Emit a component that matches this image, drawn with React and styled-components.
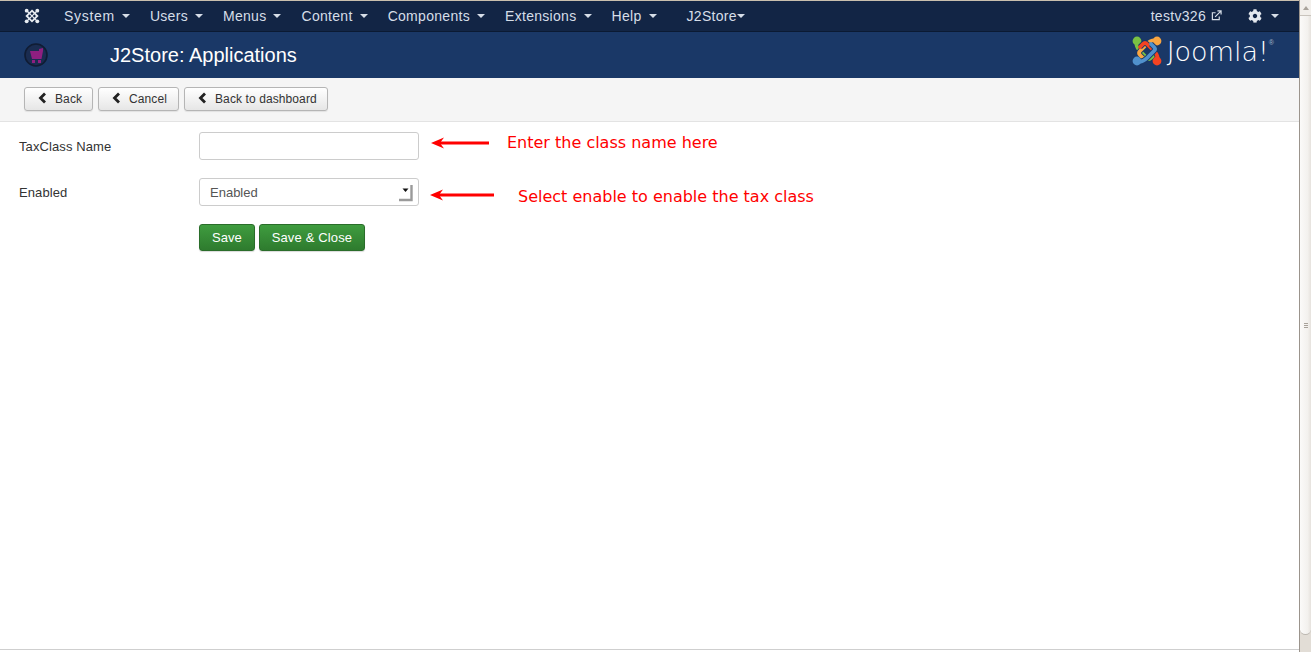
import React from "react";
import styled, { createGlobalStyle } from "styled-components";
import { FaCog } from "react-icons/fa";

const GlobalStyle = createGlobalStyle`
  html, body {
    margin: 0;
    padding: 0;
    background: #fff;
    overflow: hidden;
  }
  * { box-sizing: border-box; }
`;

const Page = styled.div`
  display: flex;
  width: 1311px;
  height: 652px;
  overflow: hidden;
  font-family: "Liberation Sans", Arial, sans-serif;
  color: #333;
`;

const Main = styled.div`
  flex: 1;
  min-width: 0;
  display: flex;
  flex-direction: column;
  border-top: 1px solid #c9bfae;
`;

const NavBar = styled.div`
  height: 31px;
  display: flex;
  align-items: center;
  background: #122545;
  border-bottom: 1px solid #0b1a33;
  padding: 0 20px 1px 24px;
  font-size: 14px;
  color: #d6dee8;
`;

const NavLogo = styled.svg`
  width: 16px;
  height: 16px;
  margin-right: 24px;
`;

const NavItem = styled.span`
  display: flex;
  align-items: center;
  gap: ${(p) => (p.$tight ? "0" : "7px")};
  margin-right: ${(p) => p.$space || 20}px;
  letter-spacing: 0.3px;
  white-space: nowrap;
  &:first-of-type {
    letter-spacing: 0.7px;
  }
`;

const Caret = styled.i`
  display: block;
  width: 0;
  height: 0;
  border-left: 4px solid transparent;
  border-right: 4px solid transparent;
  border-top: 4px solid #d6dee8;
  margin-top: 1px;
`;

const NavRight = styled.div`
  margin-left: auto;
  display: flex;
  align-items: center;
`;

const UserName = styled.span`
  letter-spacing: 0.3px;
`;

const ExtIcon = styled.svg`
  width: 11px;
  height: 11px;
  margin-left: 5px;
  margin-right: 26px;
`;

const Gear = styled(FaCog)`
  width: 14px;
  height: 14px;
  margin-right: 9px;
  color: #e4e8ee;
`;

const TitleBar = styled.div`
  height: 46px;
  display: flex;
  align-items: center;
  background: #1a3867;
  padding: 0 25px 0 24px;
`;

const CartBadge = styled.svg`
  width: 25px;
  height: 25px;
  margin-right: 61px;
`;

const Title = styled.h1`
  margin: 0;
  font-size: 20px;
  font-weight: 400;
  color: #fff;
`;

const Brand = styled.div`
  margin-left: auto;
  margin-top: -9px;
  display: flex;
  align-items: center;
  gap: 5px;
`;

const BrandMark = styled.svg`
  width: 30px;
  height: 30px;
`;

const BrandName = styled.span`
  margin-top: 3px;
  font-family: "DejaVu Sans", sans-serif;
  font-weight: 200;
  font-size: 27px;
  line-height: 30px;
  color: #fff;
`;

const BrandReg = styled.sup`
  font-family: "Liberation Sans", sans-serif;
  font-size: 7px;
  line-height: 0;
  vertical-align: 16px;
  color: #a9b6c8;
`;

const Toolbar = styled.div`
  height: 44px;
  display: flex;
  align-items: center;
  gap: 5px;
  padding: 0 24px 2px;
  background: #f5f5f5;
  border-bottom: 1px solid #e3e3e3;
`;

const ToolButton = styled.button`
  width: ${(p) => p.$w}px;
  height: 24px;
  display: flex;
  align-items: center;
  gap: 8px;
  padding: 0 0 0 13px;
  font-family: inherit;
  font-size: 12px;
  letter-spacing: 0.1px;
  white-space: nowrap;
  color: #333;
  background: linear-gradient(#ffffff, #e6e6e6);
  border: 1px solid #b5b5b5;
  border-radius: 3px;
  box-shadow: 0 1px 1px rgba(0, 0, 0, 0.08);
`;

const BackIcon = styled.svg`
  flex: none;
  width: 9px;
  height: 12px;
  margin-top: -2px;
`;

const Form = styled.form`
  flex: 1;
  display: flex;
  flex-direction: column;
  padding: 10px 0 0 19px;
  border-bottom: 1px solid #cfcfcf;
  margin-bottom: 2px;
`;

const Row = styled.div`
  display: flex;
  align-items: center;
  height: 28px;
  margin-bottom: 18px;
`;

const Label = styled.label`
  width: 180px;
  font-size: 13px;
  letter-spacing: 0.1px;
  color: #333;
`;

const TextInput = styled.input`
  width: 220px;
  height: 28px;
  padding: 0 10px;
  border: 1px solid #ccc;
  border-radius: 3px;
  background: #fff;
`;

const SelectWrap = styled.div`
  position: relative;
  width: 220px;
  height: 28px;
`;

const Select = styled.select`
  appearance: none;
  width: 100%;
  height: 100%;
  padding: 0 10px;
  border: 1px solid #ccc;
  border-radius: 3px;
  background: #fff;
  font-family: inherit;
  font-size: 13px;
  color: #555;
`;

const SelectArrow = styled.svg`
  position: absolute;
  right: 5px;
  top: 5px;
  width: 15px;
  height: 19px;
  pointer-events: none;
`;

const ArrowMark = styled.svg`
  flex: none;
  width: ${(p) => p.$w}px;
  height: 12px;
  margin-left: ${(p) => p.$left}px;
  transform: translateY(${(p) => p.$dy}px);
`;

const Note = styled.span`
  margin-left: ${(p) => p.$left}px;
  transform: translateY(${(p) => p.$dy}px);
  font-family: "DejaVu Sans", sans-serif;
  font-size: 16px;
  color: #f00;
  white-space: nowrap;
`;

const Actions = styled.div`
  display: flex;
  gap: 4px;
  padding-left: 180px;
`;

const SaveButton = styled.button`
  height: 27px;
  padding: 0 12px;
  font-family: inherit;
  font-size: 13px;
  letter-spacing: ${(p) => (p.$wide ? "0.15px" : "0")};
  color: #fff;
  background: linear-gradient(#3f9c3f, #2e7b2e);
  border: 1px solid #2a6d2a;
  border-radius: 3px;
  box-shadow: 0 1px 1px rgba(0, 0, 0, 0.15);
`;

const Scrollbar = styled.div`
  width: 12px;
  display: flex;
  flex-direction: column;
  border-left: 1px solid #9b948c;
  background: #e2ddd6;
`;

const ScrollUp = styled.div`
  height: 15px;
  display: flex;
  align-items: center;
  justify-content: center;
  background: #f2efeb;
  &::before {
    content: "";
    border-left: 3px solid transparent;
    border-right: 3px solid transparent;
    border-bottom: 4px solid #a8a29a;
  }
`;

const ScrollThumb = styled.div`
  height: 620px;
  display: flex;
  flex-direction: column;
  align-items: center;
  justify-content: center;
  gap: 1px;
  background: linear-gradient(90deg, #fbfaf9, #f3f1ee 70%, #e6e2dd);
  border-radius: 0 0 6px 6px / 0 0 6px 6px;
  border-top: 1px solid #c9c4bd;
  border-bottom: 1px solid #bdb8b1;
`;

const Grip = styled.i`
  display: block;
  width: 4px;
  height: 1px;
  background: #a8a29a;
`;

const navItems = ["System", "Users", "Menus", "Content", "Components", "Extensions"];

const armPaths = [
  "M5 5 Q3 10 8 15 L15 22 Q17 24 19 22 L22 19",
  "M25 5 Q20 3 15 8 L8 15 Q6 17 8 19 L11 22",
  "M25 25 Q27 20 22 15 L15 8 Q13 6 11 8 L8 11",
  "M5 25 Q10 27 15 22 L22 15 Q24 13 22 11 L19 8",
];
const brandColors = ["#7ac143", "#f9a541", "#f44321", "#5091cd"];

function BrandArms() {
  return (
    <>
      {armPaths.map((d, i) => {
        const [cx, cy] = d.slice(1).split(" ");
        return (
          <g key={d}>
            <path d={d} fill="none" stroke="#1a3867" strokeWidth="5.4" />
            <path d={d} fill="none" stroke={brandColors[i]} strokeWidth="3.8" strokeLinecap="round" />
            <circle cx={cx} cy={cy} r="4.4" fill={brandColors[i]} />
          </g>
        );
      })}
    </>
  );
}

function MonoMark() {
  return (
    <g fill="none" stroke="#e8edf2">
      <path d="M15 5 L25 15 L15 25 L5 15 Z" strokeWidth="3.4" />
      <path d="M5 5 L25 25 M25 5 L5 25" strokeWidth="2.4" />
      <circle cx="5" cy="5" r="3.6" fill="#e8edf2" stroke="none" />
      <circle cx="25" cy="5" r="3.6" fill="#e8edf2" stroke="none" />
      <circle cx="25" cy="25" r="3.6" fill="#e8edf2" stroke="none" />
      <circle cx="5" cy="25" r="3.6" fill="#e8edf2" stroke="none" />
    </g>
  );
}

function LeftArrow() {
  return (
    <>
      <path d="M8 6 L100 6" stroke="#f00" strokeWidth="3" />
      <path d="M0 6 L13 0.5 L9 6 L13 11.5 Z" fill="#f00" />
    </>
  );
}

function Chevron() {
  return (
    <BackIcon viewBox="0 0 9 12">
      <path d="M7 1.5 L2.5 6 L7 10.5" fill="none" stroke="#222" strokeWidth="2.8" />
    </BackIcon>
  );
}

export default function App() {
  return (
    <Page>
      <GlobalStyle />
      <Main>
        <NavBar>
          <NavLogo viewBox="0 0 30 30">
            <MonoMark />
          </NavLogo>
          {navItems.map((name) => (
            <NavItem key={name}>
              {name} <Caret />
            </NavItem>
          ))}
          <NavItem $space={30}>
            Help <Caret />
          </NavItem>
          <NavItem $tight>
            J2Store
            <Caret />
          </NavItem>
          <NavRight>
            <UserName>testv326</UserName>
            <ExtIcon viewBox="0 0 12 12" fill="none" stroke="#d6dee8" strokeWidth="1.3">
              <path d="M9 7v3.5H1.5V3H5" />
              <path d="M4.5 7.5L10.5 1.5M7 1h4v4" />
            </ExtIcon>
            <Gear />
            <Caret />
          </NavRight>
        </NavBar>

        <TitleBar>
          <CartBadge viewBox="0 0 25 25">
            <circle cx="12" cy="12" r="11" fill="#1a2c50" stroke="#101c33" strokeWidth="1.6" />
            <path d="M6 8h13l-1.5 8H8z" fill="#8e1f80" />
            <path d="M15 6l4 -1v3h-4z" fill="#8e1f80" />
            <rect x="8" y="17" width="3" height="3" fill="#8e1f80" />
            <rect x="14" y="17" width="3" height="3" fill="#8e1f80" />
          </CartBadge>
          <Title>J2Store: Applications</Title>
          <Brand>
            <BrandMark viewBox="0 0 30 30">
              <BrandArms />
            </BrandMark>
            <BrandName>
              Joomla!<BrandReg>®</BrandReg>
            </BrandName>
          </Brand>
        </TitleBar>

        <Toolbar>
          <ToolButton type="button" $w={69}>
            <Chevron /> Back
          </ToolButton>
          <ToolButton type="button" $w={81}>
            <Chevron /> Cancel
          </ToolButton>
          <ToolButton type="button" $w={144}>
            <Chevron /> Back to dashboard
          </ToolButton>
        </Toolbar>

        <Form>
          <Row>
            <Label>TaxClass Name</Label>
            <TextInput type="text" />
            <ArrowMark $w={58} $left={12} $dy={-3} viewBox="0 0 58 12">
              <LeftArrow />
            </ArrowMark>
            <Note $left={18} $dy={-4}>Enter the class name here</Note>
          </Row>
          <Row>
            <Label>Enabled</Label>
            <SelectWrap>
              <Select defaultValue="1">
                <option value="1">Enabled</option>
                <option value="0">Disabled</option>
              </Select>
              <SelectArrow viewBox="0 0 15 19">
                <path d="M3.5 5.5h6l-3 3.5z" fill="#111" />
                <path d="M0 17h12.5V2" fill="none" stroke="#9a9a9a" strokeWidth="2.4" />
              </SelectArrow>
            </SelectWrap>
            <ArrowMark $w={64} $left={11} $dy={3} viewBox="0 0 64 12">
              <LeftArrow />
            </ArrowMark>
            <Note $left={24} $dy={4}>Select enable to enable the tax class</Note>
          </Row>
          <Actions>
            <SaveButton type="button">Save</SaveButton>
            <SaveButton type="button" $wide>Save &amp; Close</SaveButton>
          </Actions>
        </Form>
      </Main>
      <Scrollbar>
        <ScrollUp />
        <ScrollThumb>
          <Grip />
          <Grip />
          <Grip />
        </ScrollThumb>
      </Scrollbar>
    </Page>
  );
}
